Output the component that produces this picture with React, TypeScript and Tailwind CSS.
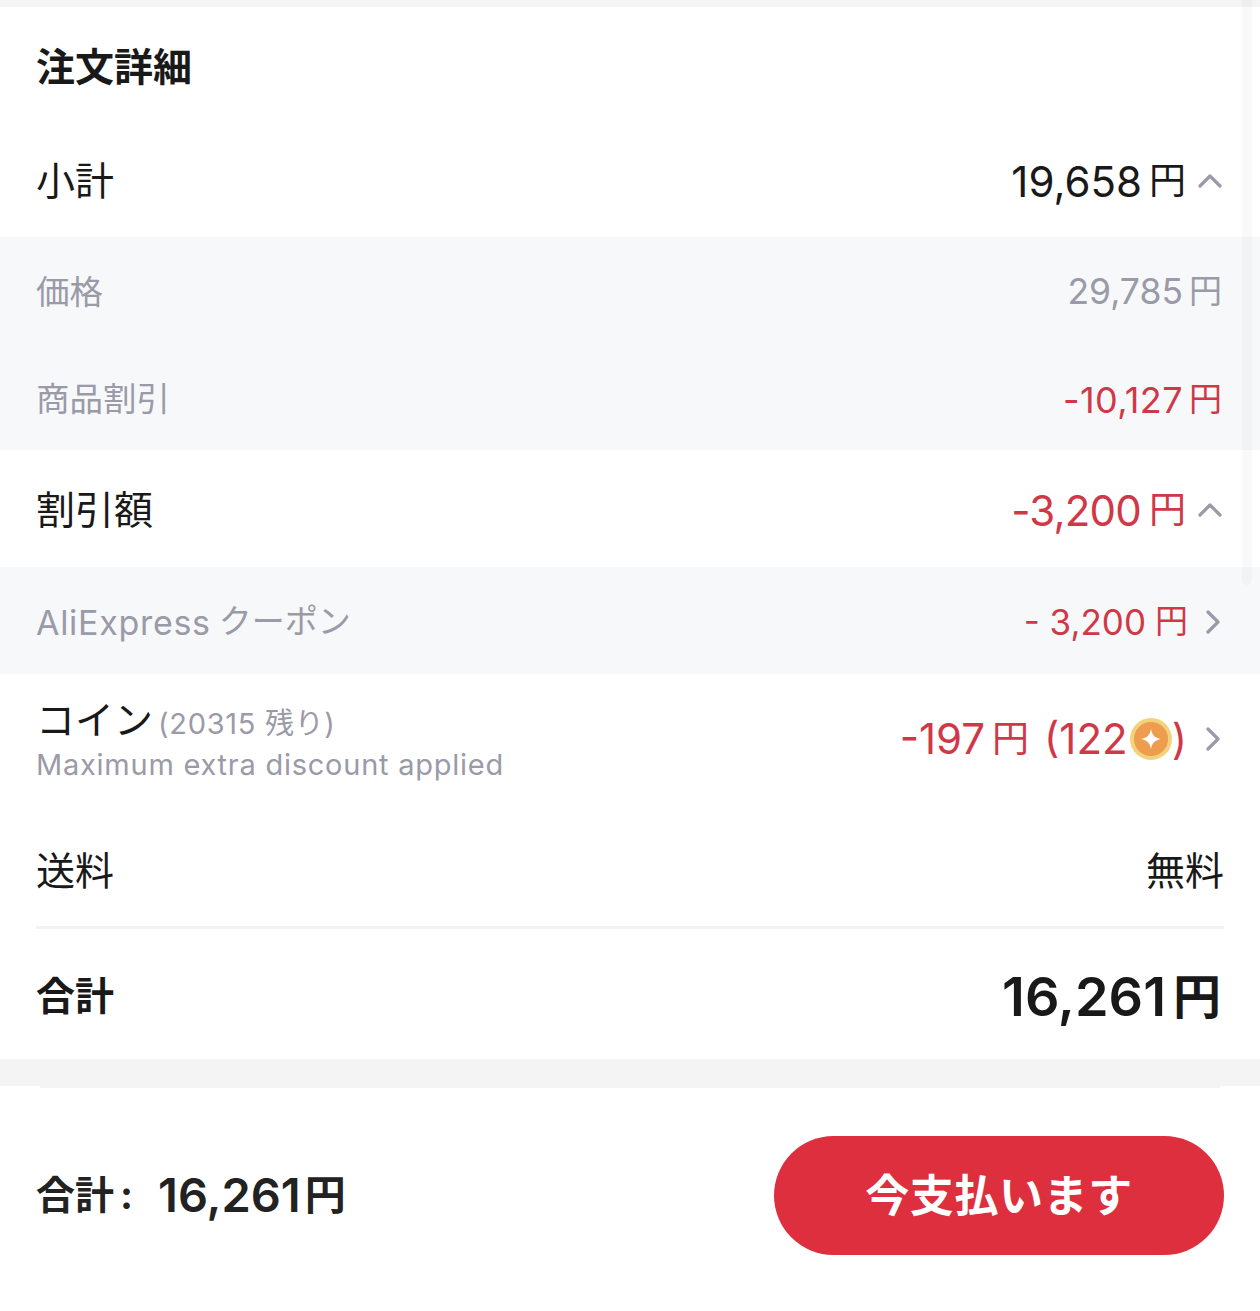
import React from 'react';

const font = "[font-family:Inter,'Noto_Sans_CJK_JP',sans-serif]";

const ChevronUp = () => (
  <svg width="24" height="14" viewBox="0 0 24 14" fill="none" className="mr-[2px] shrink-0">
    <path d="M2 12 L12 2 L22 12" stroke="#9a9aa8" strokeWidth="3.2" strokeLinecap="round" strokeLinejoin="round" />
  </svg>
);

const ChevronRight = () => (
  <svg width="14" height="24" viewBox="0 0 14 24" fill="none" className="mr-[4px] shrink-0">
    <path d="M2 2 L12 12 L2 22" stroke="#9a9aa8" strokeWidth="3.2" strokeLinecap="round" strokeLinejoin="round" />
  </svg>
);

const Coin = () => (
  <span className="ml-[2px] flex h-[42px] w-[42px] shrink-0 items-center justify-center rounded-full border-[4px] border-[#f3d27c] bg-[#ee9c4e]">
    <svg width="22" height="22" viewBox="0 0 22 22">
      <path d="M11 1 C12 7 15 10 21 11 C15 12 12 15 11 21 C10 15 7 12 1 11 C7 10 10 7 11 1 Z" fill="#fff" />
    </svg>
  </span>
);

export default function App() {
  return (
    <div className={`relative min-h-[1311px] w-[1260px] overflow-hidden bg-white text-[#191919] ${font}`}>
      <div className="h-[7px] bg-[#f4f4f5]" />

      <div className="absolute right-[8px] top-0 h-[585px] w-[10px] rounded-b-md bg-black/[0.025]" />

      <div className="flex h-[115px] items-center px-9 pt-[5px] text-[39px] font-bold">
        <h1>注文詳細</h1>
      </div>

      <div className="flex h-[115px] items-center justify-between px-9 pt-[3px]">
        <span className="text-[39px]">小計</span>
        <div className="flex items-center gap-[12px]">
          <span className="flex items-center text-[42px]">
            19,658<span className="ml-[7px] text-[37px]">円</span>
          </span>
          <ChevronUp />
        </div>
      </div>

      <div className="flex h-[213px] flex-col bg-[#f7f8fa] px-9 text-[33.5px]">
        <div className="flex h-[110px] items-center justify-between text-[#9a9aa8]">
          <span>価格</span>
          <span className="flex items-center pr-[2px] text-[35.5px]">
            29,785<span className="ml-[6px] text-[33px]">円</span>
          </span>
        </div>
        <div className="flex h-[103px] items-center justify-between pt-[2px] text-[#9a9aa8]">
          <span>商品割引</span>
          <span className="flex items-center pr-[2px] text-[36px] tracking-[0.4px] text-[#d13847]">
            -10,127<span className="ml-[6px] text-[33px] tracking-normal">円</span>
          </span>
        </div>
      </div>

      <div className="flex h-[117px] items-center justify-between px-9 pt-[3px]">
        <span className="text-[39px]">割引額</span>
        <div className="flex items-center gap-[12px]">
          <span className="flex items-center text-[42px] tracking-[-0.8px] text-[#d13847]">
            -3,200<span className="ml-[8px] text-[37px] tracking-normal">円</span>
          </span>
          <ChevronUp />
        </div>
      </div>

      <div className="flex h-[107px] items-center justify-between bg-[#f7f8fa] px-9 pt-[3px]">
        <span className="flex items-center gap-[8px] text-[34px] tracking-[0.7px] text-[#9a9aa8]">
          AliExpress<span className="text-[33px] tracking-normal">クーポン</span>
        </span>
        <div className="flex items-center gap-[18px]">
          <span className="flex items-center text-[35px] text-[#d13847]">
            - 3,200<span className="ml-[9px] text-[33px]">円</span>
          </span>
          <ChevronRight />
        </div>
      </div>

      <div className="flex h-[130px] items-start justify-between px-9 pt-[21px]">
        <div>
          <div className="flex items-baseline gap-[5px] leading-[50px]">
            <span className="text-[39px]">コイン</span>
            <span className="text-[29px] tracking-[0.7px] text-[#9a9aa8]">(20315 残り)</span>
          </div>
          <div className="text-[29px] leading-[32px] tracking-[0.75px] text-[#9a9aa8]">Maximum extra discount applied</div>
        </div>
        <div className="flex items-center gap-[19px] pt-[12px]">
          <span className="flex items-center text-[42px] text-[#d13847]">
            -197<span className="ml-[7px] text-[37px]">円</span>
            <span className="ml-[15px]">(122</span>
            <Coin />)
          </span>
          <ChevronRight />
        </div>
      </div>

      <div className="mx-9 flex h-[125px] items-center justify-between border-b-[3px] border-[#f3f3f4] pt-[12px] text-[39px]">
        <span>送料</span>
        <span>無料</span>
      </div>

      <div className="flex h-[130px] items-center justify-between px-9 pt-[5px]">
        <span className="text-[39px] font-bold">合計</span>
        <span className="flex items-center pr-[3px] text-[54px] font-semibold">
          16,261<span className="ml-[7px] text-[48px] font-bold">円</span>
        </span>
      </div>

      <div className="h-[27px] bg-[#f4f4f5]" />
      <div className="mx-10 h-[2px] bg-[#f4f4f5]" />

      <div className="flex h-[223px] items-center justify-between px-9 pb-[8px]">
        <span className="flex items-center font-semibold text-[#222]">
          <span className="text-[39px] font-bold">合計</span>
          <span className="ml-[6px] text-[39px] font-bold">:</span>
          <span className="ml-[25px] text-[47px]">16,261</span>
          <span className="ml-[4px] text-[41px] font-bold">円</span>
        </span>
        <button className="flex h-[119px] w-[450px] items-center justify-center rounded-[60px] bg-[#de2f3e] text-[44px] font-bold tracking-[0.6px] text-white">
          今支払います
        </button>
      </div>
    </div>
  );
}
